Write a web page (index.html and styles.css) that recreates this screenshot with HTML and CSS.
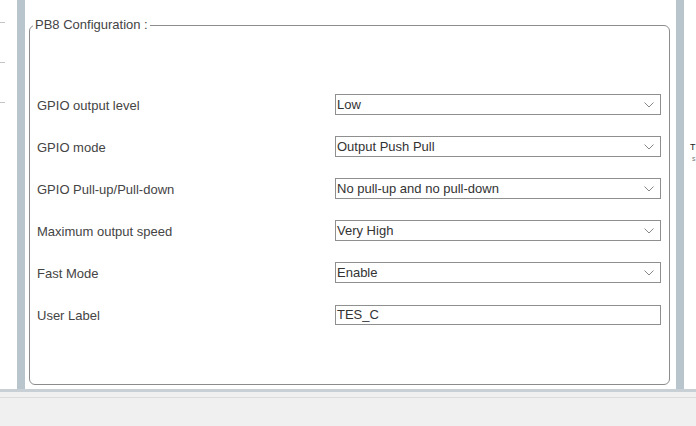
FILE: index.html
```html
<!DOCTYPE html>
<html lang="en">
<head>
    <meta charset="UTF-8">
    <meta name="viewport" content="width=device-width, initial-scale=1.0">
    <title>PB8 Configuration</title>
    <link rel="stylesheet" href="styles.css">
</head>
<body>

    <div class="main">
        <div class="side-left">
            <span class="tick"></span>
            <span class="tick"></span>
            <span class="tick"></span>
        </div>
        <div class="bar"></div>

        <div class="content">
            <fieldset class="config">
                <legend>PB8 Configuration :</legend>

                <div class="rows">
                    <div class="row">
                        <label>GPIO output level</label>
                        <div class="select"><span>Low</span><svg class="chev" viewBox="0 0 10 6"><path d="M0.5 0.5 L5 5 L9.5 0.5" /></svg></div>
                    </div>
                    <div class="row">
                        <label>GPIO mode</label>
                        <div class="select"><span>Output Push Pull</span><svg class="chev" viewBox="0 0 10 6"><path d="M0.5 0.5 L5 5 L9.5 0.5" /></svg></div>
                    </div>
                    <div class="row">
                        <label>GPIO Pull-up/Pull-down</label>
                        <div class="select"><span>No pull-up and no pull-down</span><svg class="chev" viewBox="0 0 10 6"><path d="M0.5 0.5 L5 5 L9.5 0.5" /></svg></div>
                    </div>
                    <div class="row">
                        <label>Maximum output speed</label>
                        <div class="select"><span>Very High</span><svg class="chev" viewBox="0 0 10 6"><path d="M0.5 0.5 L5 5 L9.5 0.5" /></svg></div>
                    </div>
                    <div class="row">
                        <label>Fast Mode</label>
                        <div class="select"><span>Enable</span><svg class="chev" viewBox="0 0 10 6"><path d="M0.5 0.5 L5 5 L9.5 0.5" /></svg></div>
                    </div>
                    <div class="row">
                        <label>User Label</label>
                        <div class="text-input">TES_C</div>
                    </div>
                </div>
            </fieldset>
        </div>

        <div class="bar"></div>
        <div class="side-right">
            <span>T</span>
            <span class="small">s</span>
        </div>
    </div>

    <div class="footer">
        <div class="footer-line"></div>
    </div>

</body>
</html>
```

FILE: styles.css
```css
* {
    margin: 0;
    padding: 0;
    box-sizing: border-box;
    font-family: "Liberation Sans", Arial, sans-serif;
}

body {
    width: 696px;
    height: 426px;
    overflow: hidden;
    background-color: #fff;
    display: flex;
    flex-direction: column;
}

.main {
    display: flex;
    height: 389px;
}

.side-left {
    width: 17px;
    flex-shrink: 0;
    display: flex;
    flex-direction: column;
    padding-top: 22px;
    gap: 39px;
}

.tick {
    display: block;
    width: 5px;
    height: 1px;
    background-color: #c4c4c4;
}

.bar {
    width: 8px;
    flex-shrink: 0;
    background-color: #b9c5cc;
}

.content {
    flex: 1;
    min-width: 0;
    padding: 18px 6px 4px 4px;
    display: flex;
}

.config {
    flex: 1;
    min-width: 0;
    border: 1px solid #8c8c8c;
    border-radius: 6px;
    padding: 0 8px 0 7px;
}

.config legend {
    margin-left: -4px;
    padding: 0 2px;
    font-size: 13px;
    color: #444;
    line-height: 14px;
}

.rows {
    display: flex;
    flex-direction: column;
    gap: 21px;
    padding-top: 62px;
}

.row {
    display: flex;
    align-items: center;
    justify-content: space-between;
    height: 21px;
}

.row label {
    font-size: 13px;
    color: #444;
    white-space: nowrap;
    padding-top: 1px;
}

.select,
.text-input {
    width: 326px;
    flex-shrink: 0;
    height: 21px;
    border: 1px solid #8f8f8f;
    display: flex;
    align-items: center;
    justify-content: space-between;
    padding: 0 6px 0 1px;
    font-size: 13px;
    color: #333;
}

.text-input {
    height: 20px;
}

.chev {
    width: 10px;
    height: 6px;
    fill: none;
    stroke: #888;
    stroke-width: 1;
}

.side-right {
    width: 12px;
    flex-shrink: 0;
    display: flex;
    flex-direction: column;
    padding-top: 142px;
    padding-left: 6px;
    font-size: 9px;
    color: #222;
    line-height: 11px;
    overflow: hidden;
}

.side-right .small {
    font-size: 7px;
    padding-left: 2px;
    color: #777;
}

.footer {
    flex: 1;
    border-top: 3px solid #c9d0d5;
    background-color: #f0f0f0;
    padding-top: 2px;
}

.footer-line {
    height: 100%;
    border-top: 1px solid #dcdcdc;
    border-bottom: 1px solid #d6d6d6;
    margin-top: 3px;
}
```
